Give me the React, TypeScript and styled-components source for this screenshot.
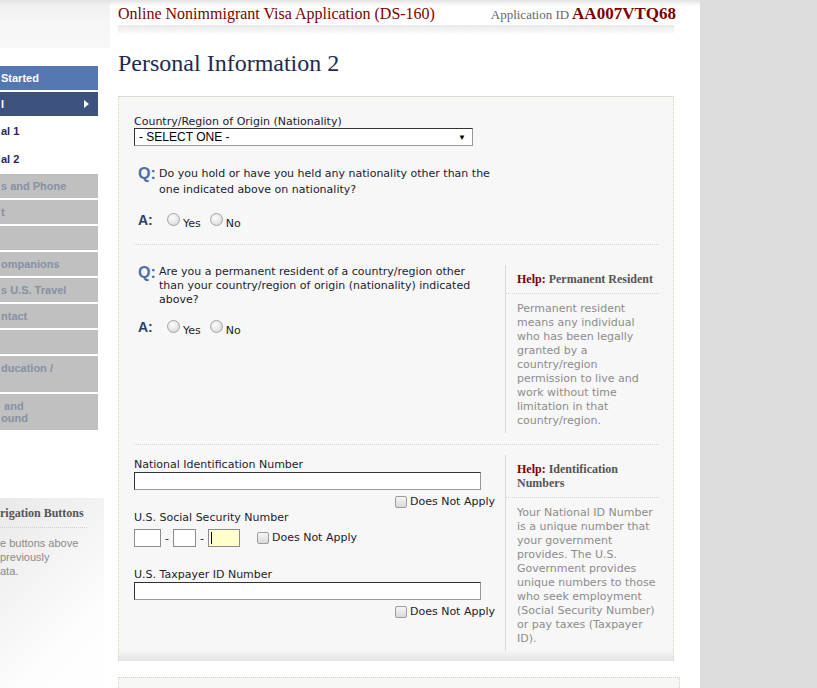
import * as React from 'react';
import styled, { createGlobalStyle, css } from 'styled-components';

const SERIF = `"Liberation Serif", "Times New Roman", serif`;
const ARIAL = `"Liberation Sans", Arial, sans-serif`;
const VERDANA = `"DejaVu Sans", Verdana, sans-serif`;

const Colors = {
  MAROON: '#7d0000',
  NAVY: '#1d2b52',
  BOX: '#f7f7f7',
  DOTS: '#d6cfbd',
  HELP_TEXT: '#8c8c8c',
};

const GlobalStyle = createGlobalStyle`
  html, body {
    margin: 0;
    padding: 0;
    background: #dcdcdc;
    overflow: hidden;
  }
`;

const Page = styled.div`
  display: flex;
  width: 700px;
  min-height: 688px;
  background: linear-gradient(to bottom, #e2e2e2 0, #f6f6f6 4px, #fff 7px);
`;

/* ---------- sidebar ---------- */

const Sidebar = styled.aside`
  width: 110px;
  flex-shrink: 0;
  display: flex;
  flex-direction: column;
`;

const SidebarTop = styled.div`
  height: 48px;
  background: linear-gradient(to bottom, #e3e3e3 0, #f1f1f1 6px, #f6f6f6 24px, #f8f8f8 100%);
`;

const NavList = styled.nav`
  width: 98px;
  margin-top: 18px;
  display: flex;
  flex-direction: column;
  gap: 2px;
`;

type NavKind = 'done' | 'active' | 'sub' | 'todo';

const NavItem = styled.div<{ $kind: NavKind; $tall?: boolean }>`
  position: relative;
  font-family: ${ARIAL};
  font-weight: bold;
  font-size: 11px;
  line-height: 12px;
  white-space: pre;
  padding: 0 0 0 1px;
  height: ${(p) => (p.$tall ? '36px' : '24px')};
  display: flex;
  align-items: ${(p) => (p.$tall ? 'flex-start' : 'center')};
  box-sizing: border-box;
  ${(p) => p.$tall && 'padding-top: 6px;'}

  ${(p) =>
    p.$kind === 'done' &&
    css`
      background: #5476b1;
      color: #fff;
    `}
  ${(p) =>
    p.$kind === 'active' &&
    css`
      background: #3e527f;
      color: #fff;
    `}
  ${(p) =>
    p.$kind === 'sub' &&
    css`
      height: 26px;
      color: #1e2c55;
    `}
  ${(p) =>
    p.$kind === 'todo' &&
    css`
      background: #c0c0c0;
      color: #8591a4;
    `}
`;

const NavArrow = styled.span`
  position: absolute;
  right: 9px;
  top: 8px;
  width: 0;
  height: 0;
  border-top: 4px solid transparent;
  border-bottom: 4px solid transparent;
  border-left: 5px solid #fff;
`;

const NavHelp = styled.div`
  margin-top: 68px;
  width: 104px;
  flex: 1;
  padding-top: 8px;
  background: linear-gradient(135deg, #e9e9e9 0%, #f3f3f3 35%, #fdfdfd 70%, #fff 100%);
`;

const NavHelpTitle = styled.div`
  font-family: ${SERIF};
  font-weight: bold;
  font-size: 12px;
  color: #555;
  line-height: 14px;
  width: 87px;
  padding-bottom: 7px;
  border-bottom: 1px dotted #cfcfcf;
  white-space: nowrap;
`;

const NavHelpText = styled.div`
  font-family: ${ARIAL};
  font-size: 11px;
  line-height: 14px;
  color: #8a8a8a;
  padding-top: 8px;
`;

/* ---------- main column ---------- */

const Main = styled.main`
  flex: 1;
  padding: 0 26px 0 8px;
  display: flex;
  flex-direction: column;
`;

const Header = styled.header`
  display: flex;
  justify-content: space-between;
  align-items: baseline;
  height: 25px;
  box-sizing: border-box;
  padding-top: 4px;
`;

const AppTitle = styled.div`
  font-family: ${SERIF};
  font-size: 16px;
  color: ${Colors.MAROON};
`;

const AppId = styled.div`
  font-family: ${SERIF};
  font-size: 13px;
  color: #666;

  b {
    font-size: 17px;
    color: ${Colors.MAROON};
    margin-left: 3px;
  }
`;

const HeaderBand = styled.div`
  height: 10px;
  margin-right: 2px;
  background:
    repeating-linear-gradient(45deg, rgba(255, 255, 255, 0.35) 0 1px, transparent 1px 3px),
    linear-gradient(to bottom, #e6e6e6, #fff);
`;

const PageTitle = styled.h1`
  margin: 14px 0 19px;
  font-family: ${SERIF};
  font-weight: normal;
  font-size: 24px;
  line-height: 28px;
  color: ${Colors.NAVY};
`;

const FormBox = styled.section`
  margin-right: 2px;
  border: 1px dotted ${Colors.DOTS};
  border-bottom: none;
  padding: 0 14px 10px 15px;
  background: linear-gradient(to bottom, ${Colors.BOX} calc(100% - 11px), #e3e3e3 100%);
`;

const NextBox = styled.div`
  margin: 16px -4px 0 0;
  height: 20px;
  border: 1px dotted ${Colors.DOTS};
  border-bottom: none;
  background: ${Colors.BOX};
`;

const Section = styled.div<{ $padTop: number; $padBottom: number; $last?: boolean }>`
  display: flex;
  gap: 9px;
  padding: ${(p) => p.$padTop}px 0 ${(p) => p.$padBottom}px;
  border-bottom: ${(p) => (p.$last ? 'none' : '1px dotted #d4d4d4')};
`;

const Fields = styled.div<{ $offset?: number }>`
  width: 362px;
  flex-shrink: 0;
  padding-top: ${(p) => p.$offset || 0}px;
  font-family: ${VERDANA};
  font-size: 11px;
  color: #1c1c2c;
`;

const Help = styled.div`
  width: 153px;
  border-left: 1px solid #d9d9d9;
  padding-bottom: 5px;
`;

const HelpTitle = styled.div`
  font-family: ${SERIF};
  font-weight: bold;
  font-size: 12px;
  line-height: 14px;
  color: #555;
  padding: 7px 0 7px 11px;
  border-bottom: 1px dotted #d4d4d4;

  span {
    color: ${Colors.MAROON};
  }
`;

const HelpBody = styled.div`
  font-family: ${VERDANA};
  font-size: 11px;
  line-height: 14px;
  color: ${Colors.HELP_TEXT};
  padding: 8px 0 0 11px;
  white-space: nowrap;
`;

const Label = styled.div<{ $top?: number }>`
  margin-top: ${(p) => p.$top || 0}px;
  line-height: 14px;
  white-space: nowrap;
`;

const Select = styled.div`
  width: 339px;
  height: 18px;
  box-sizing: border-box;
  margin-top: -1px;
  border: 1px solid;
  border-color: #333 #999 #999 #333;
  background: #fff;
  display: flex;
  align-items: center;
  justify-content: space-between;
  padding: 0 6px 0 4px;
  font-family: ${ARIAL};
  font-size: 12px;
  color: #000;

  &::after {
    content: '▼';
    font-size: 8px;
  }
`;

const QRow = styled.div<{ $top: number; $lh: number }>`
  display: flex;
  margin-top: ${(p) => p.$top}px;
  padding-left: 4px;
  line-height: ${(p) => p.$lh}px;
`;

const QMark = styled.span`
  font-family: ${ARIAL};
  font-weight: bold;
  font-size: 16px;
  color: #4d6ea9;
  width: 21px;
  flex-shrink: 0;
  line-height: 16px;
`;

const ARow = styled.div<{ $top: number }>`
  display: flex;
  align-items: flex-start;
  margin-top: ${(p) => p.$top}px;
  padding-left: 4px;
`;

const AMark = styled.span`
  font-family: ${ARIAL};
  font-weight: bold;
  font-size: 14px;
  line-height: 16px;
  color: #2d3d66;
  width: 29px;
`;

const Choice = styled.label`
  display: flex;
  align-items: flex-start;
  margin-right: 9px;
  line-height: 14px;
  padding-top: 2px;
`;

const ChoiceText = styled.span`
  margin-top: 3px;
`;

const Radio = styled.span`
  width: 11px;
  height: 11px;
  border-radius: 50%;
  border: 1px solid #a4a4a4;
  background: radial-gradient(circle at 40% 35%, #fdfdfd 0, #e6e6e6 55%, #cfcfcf 100%);
  margin-right: 3px;
  margin-top: -1px;
`;

const Check = styled.span`
  width: 10px;
  height: 10px;
  border-radius: 2px;
  border: 1px solid #9c9c9c;
  background: linear-gradient(to bottom, #f6f6f6, #d9d9d9);
  margin-right: 3px;
`;

const TextInput = styled.div<{ $width: number; $focus?: boolean }>`
  width: ${(p) => p.$width}px;
  height: 18px;
  box-sizing: border-box;
  border: 1px solid;
  background: ${(p) => (p.$focus ? '#ffffcc' : '#fff')};
  position: relative;

  ${(p) =>
    p.$width > 100
      ? css`
          border-color: #333 #999 #999 #333;
        `
      : css`
          border-color: #8c8c8c;
        `}

  ${(p) =>
    p.$focus &&
    css`
      &::before {
        content: '';
        position: absolute;
        left: 2px;
        top: 2px;
        width: 1px;
        height: 12px;
        background: #000;
      }
    `}
`;

const NotApply = styled.div<{ $top: number }>`
  display: flex;
  justify-content: flex-end;
  align-items: center;
  margin-top: ${(p) => p.$top}px;
  padding-right: 1px;
  line-height: 14px;
`;

const SsnRow = styled.div`
  display: flex;
  align-items: center;
  gap: 4px;
  margin-top: 4px;
`;

const InlineApply = styled.div`
  display: flex;
  align-items: center;
  margin-left: 13px;
  line-height: 14px;
`;

interface IYesNoProps {
  top: number;
}

function YesNo(props: IYesNoProps) {
  return (
    <ARow $top={props.top}>
      <AMark>A:</AMark>
      <Choice>
        <Radio />
        <ChoiceText>Yes</ChoiceText>
      </Choice>
      <Choice>
        <Radio />
        <ChoiceText>No</ChoiceText>
      </Choice>
    </ARow>
  );
}

const navItems: { text: string; kind: NavKind; tall?: boolean; arrow?: boolean }[] = [
  { text: 'Started', kind: 'done' },
  { text: 'l', kind: 'active', arrow: true },
  { text: 'al 1', kind: 'sub' },
  { text: 'al 2', kind: 'sub' },
  { text: 's and Phone', kind: 'todo' },
  { text: 't', kind: 'todo' },
  { text: '', kind: 'todo' },
  { text: 'ompanions', kind: 'todo' },
  { text: 's U.S. Travel', kind: 'todo' },
  { text: 'ntact', kind: 'todo' },
  { text: '', kind: 'todo' },
  { text: 'ducation /', kind: 'todo', tall: true },
  { text: ' and\nound', kind: 'todo', tall: true },
];

export default function App() {
  return (
    <>
      <GlobalStyle />
      <Page>
        <Sidebar>
          <SidebarTop />
          <NavList>
            {navItems.map((item, i) => (
              <NavItem key={i} $kind={item.kind} $tall={item.tall}>
                {item.text}
                {item.arrow && <NavArrow />}
              </NavItem>
            ))}
          </NavList>
          <NavHelp>
            <NavHelpTitle>rigation Buttons</NavHelpTitle>
            <NavHelpText>
              e buttons above
              <br />
              previously
              <br />
              ata.
            </NavHelpText>
          </NavHelp>
        </Sidebar>

        <Main>
          <Header>
            <AppTitle>Online Nonimmigrant Visa Application (DS-160)</AppTitle>
            <AppId>
              Application ID<b>AA007VTQ68</b>
            </AppId>
          </Header>
          <HeaderBand />
          <PageTitle>Personal Information 2</PageTitle>

          <FormBox>
            <Section $padTop={18} $padBottom={13}>
              <Fields>
                <Label>Country/Region of Origin (Nationality)</Label>
                <Select>- SELECT ONE -</Select>
                <QRow $top={20} $lh={16}>
                  <QMark>Q:</QMark>
                  <span>
                    Do you hold or have you held any nationality other than the
                    <br />
                    one indicated above on nationality?
                  </span>
                </QRow>
                <YesNo top={14} />
              </Fields>
            </Section>

            <Section $padTop={20} $padBottom={11}>
              <Fields $offset={-5}>
                <QRow $top={0} $lh={14}>
                  <QMark>Q:</QMark>
                  <span>
                    Are you a permanent resident of a country/region other
                    <br />
                    than your country/region of origin (nationality) indicated
                    <br />
                    above?
                  </span>
                </QRow>
                <YesNo top={12} />
              </Fields>
              <Help>
                <HelpTitle>
                  <span>Help:</span> Permanent Resident
                </HelpTitle>
                <HelpBody>
                  Permanent resident
                  <br />
                  means any individual
                  <br />
                  who has been legally
                  <br />
                  granted by a
                  <br />
                  country/region
                  <br />
                  permission to live and
                  <br />
                  work without time
                  <br />
                  limitation in that
                  <br />
                  country/region.
                </HelpBody>
              </Help>
            </Section>

            <Section $padTop={10} $padBottom={0} $last>
              <Fields $offset={3}>
                <Label>National Identification Number</Label>
                <TextInput $width={347} />
                <NotApply $top={5}>
                  <Check />
                  Does Not Apply
                </NotApply>
                <Label $top={2}>U.S. Social Security Number</Label>
                <SsnRow>
                  <TextInput $width={27} />
                  <span>-</span>
                  <TextInput $width={23} />
                  <span>-</span>
                  <TextInput $width={32} $focus />
                  <InlineApply>
                    <Check />
                    Does Not Apply
                  </InlineApply>
                </SsnRow>
                <Label $top={21}>U.S. Taxpayer ID Number</Label>
                <TextInput $width={347} />
                <NotApply $top={5}>
                  <Check />
                  Does Not Apply
                </NotApply>
              </Fields>
              <Help>
                <HelpTitle>
                  <span>Help:</span> Identification
                  <br />
                  Numbers
                </HelpTitle>
                <HelpBody>
                  Your National ID Number
                  <br />
                  is a unique number that
                  <br />
                  your government
                  <br />
                  provides. The U.S.
                  <br />
                  Government provides
                  <br />
                  unique numbers to those
                  <br />
                  who seek employment
                  <br />
                  (Social Security Number)
                  <br />
                  or pay taxes (Taxpayer
                  <br />
                  ID).
                </HelpBody>
              </Help>
            </Section>
          </FormBox>
          <NextBox />
        </Main>
      </Page>
    </>
  );
}
